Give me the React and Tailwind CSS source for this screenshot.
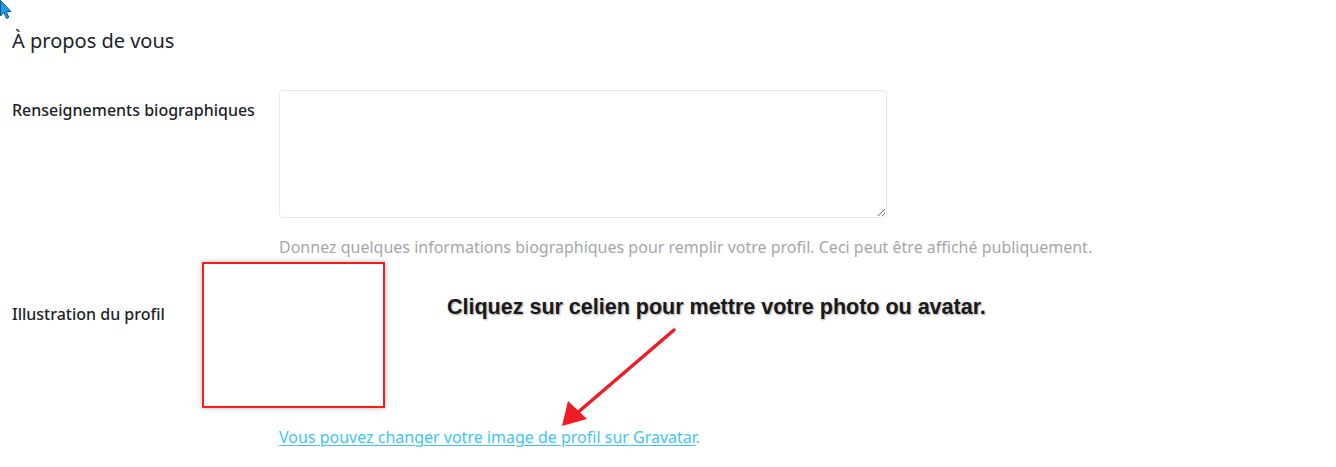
export default function App() {
  return (
    <div className="relative min-h-screen bg-white px-3 pt-[27px] text-[#1d2327]" style={{ fontFamily: '"Noto Sans", sans-serif' }}>
      {/* cursor */}
      <svg className="absolute left-0 top-0" width="12" height="20" viewBox="0 0 12 20">
        <path d="M0.5 0.5 L0.5 16 L4 12.5 L6.5 18.5 L8.8 17.5 L6.4 11.6 L11 11.6 Z" fill="#1ba1e2" stroke="#0a5a8a" strokeWidth="1" />
      </svg>

      <h2 className="text-[20px] leading-7">À propos de vous</h2>

      <div className="mt-[35px] flex">
        <div className="w-[267px] shrink-0 pt-[8px] text-[16px] font-medium">Renseignements biographiques</div>
        <div className="flex flex-col">
          <textarea className="h-[128px] w-[608px] resize-y rounded-[4px] border border-[#e6e8ec] bg-white"></textarea>
          <p className="mt-[17px] text-[16px] leading-6 text-[#a3a7ab]">
            Donnez quelques informations biographiques pour remplir votre profil. Ceci peut être affiché publiquement.
          </p>
        </div>
      </div>

      <div className="relative mt-[41px] flex">
        <div className="w-[267px] shrink-0 pt-[2px] text-[16px] leading-6 font-medium">Illustration du profil</div>
        <div className="flex flex-col">
          <div className="h-[125px]"></div>
          <p className="text-[16px] leading-6 text-[#a3a7ab]">
            <a href="#" className="text-[#3ec5f5] underline decoration-1 underline-offset-2">
              Vous pouvez changer votre image de profil sur Gravatar
            </a>
            .
          </p>
        </div>

        {/* annotation box */}
        <div className="absolute left-[190px] top-[-38px] h-[146px] w-[183px] border-2 border-[#ff1a1a] shadow-[0_0_6px_rgba(0,0,0,0.25)]"></div>

        {/* annotation text */}
        <div
          className="absolute left-[435px] top-[-8px] text-[21.5px] leading-[30px] font-bold text-[#1a1a1a]"
          style={{ fontFamily: '"Liberation Sans", Arial, sans-serif', textShadow: '1px 1px 2px rgba(0,0,0,0.35)' }}
        >
          Cliquez sur celien pour mettre votre photo ou avatar.
        </div>

        {/* arrow */}
        <svg className="absolute left-[527px] top-[23px]" width="150" height="110" viewBox="0 0 150 110">
          <line x1="135" y1="7" x2="37" y2="91" stroke="#ee1c24" strokeWidth="3.5" strokeLinecap="round" />
          <path d="M23 103 L29 78 L48 96 Z" fill="#ee1c24" />
        </svg>
      </div>
    </div>
  );
}
